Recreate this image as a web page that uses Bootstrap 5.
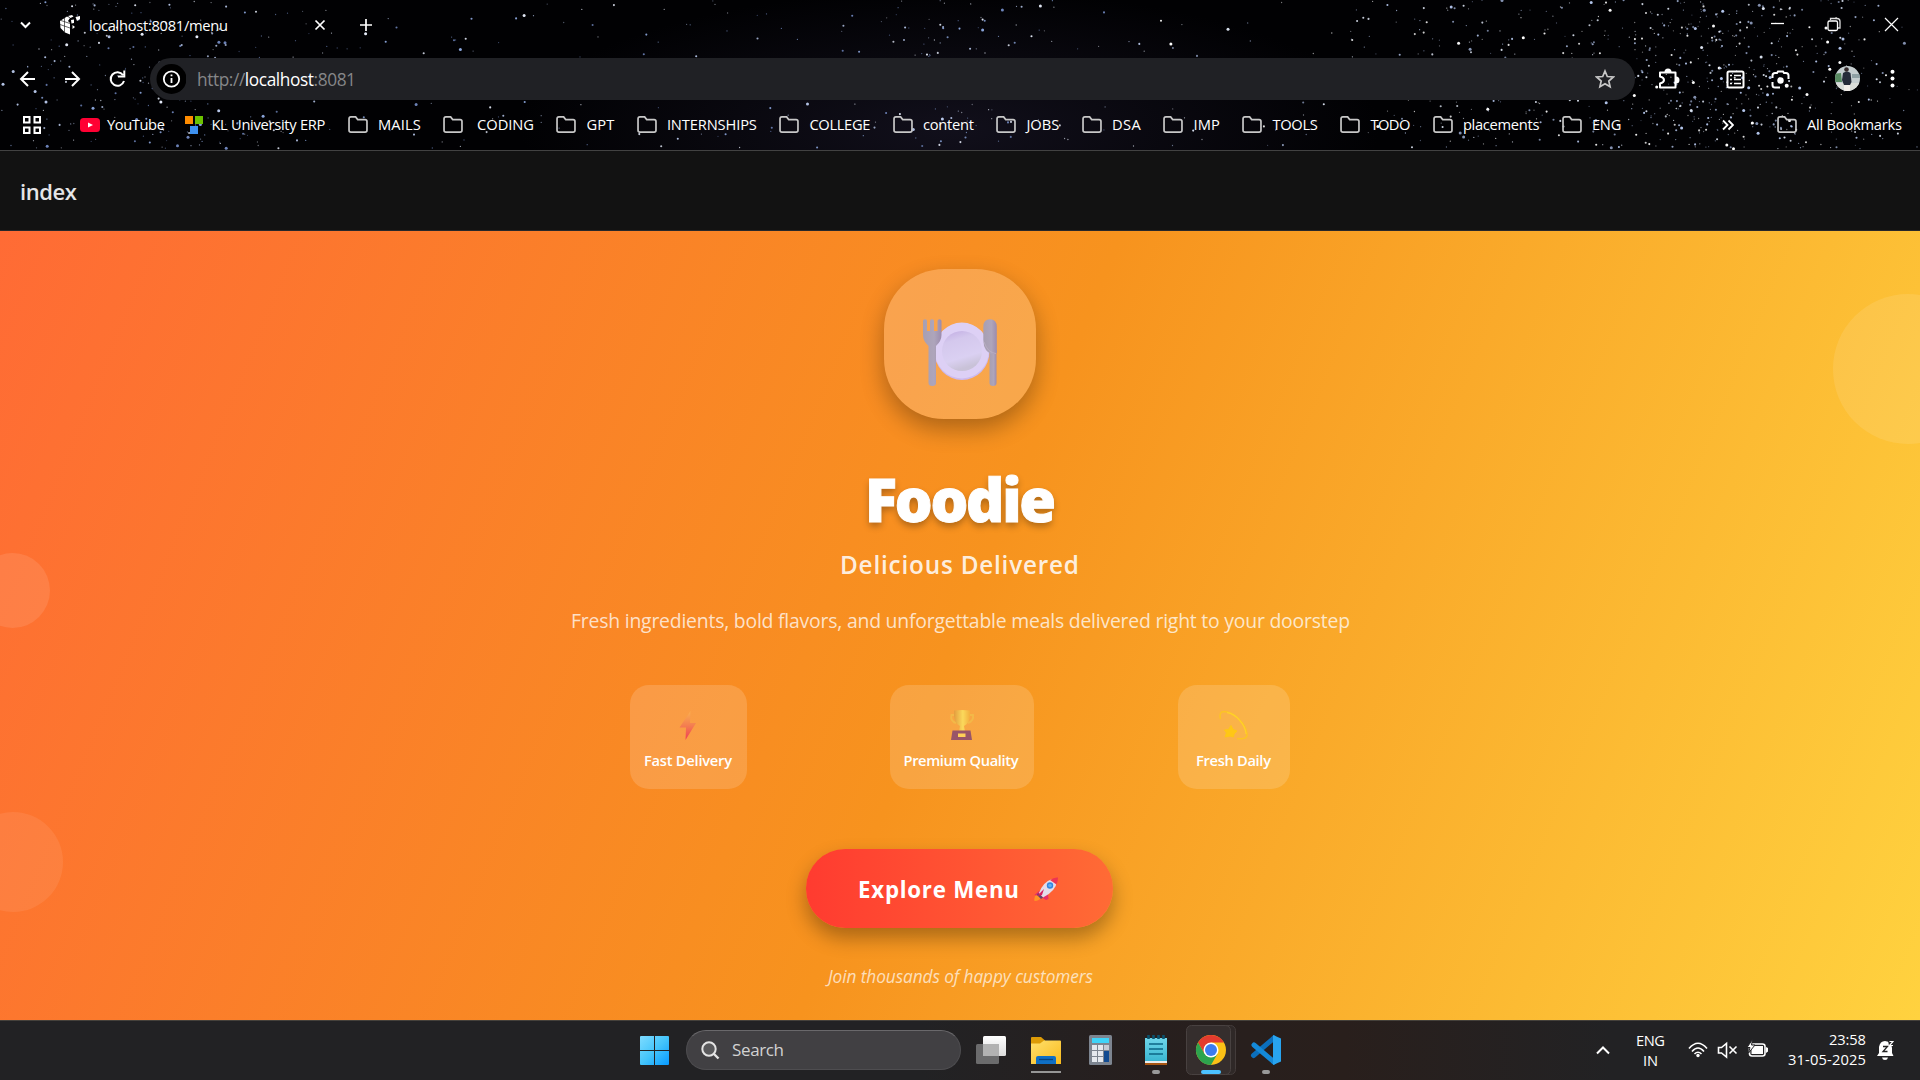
<!DOCTYPE html>
<html lang="en">
<head>
<meta charset="utf-8">
<title>localhost:8081/menu</title>
<link href="https://cdn.jsdelivr.net/npm/bootstrap@5.3.0/dist/css/bootstrap.min.css" rel="stylesheet">
<style>
body{width:1920px;height:1080px;overflow:hidden;background:#000;font-family:"Open Sans","Noto Sans",sans-serif;font-size:14.7px;line-height:20px;color:#fff}
svg{display:block;flex:none}
[data-w]{display:inline-block;white-space:pre;flex:none}
span[data-w]{margin-left:-1px;margin-right:1px}
.chrome{height:151px;border-bottom:1px solid #424242;background:#010103}
.sky{left:0;top:0;z-index:0}
.bar{position:relative;z-index:1}
.tabs{height:50px}.tools{height:58px}.marks{height:33px;gap:22.5px;padding-left:23px;padding-right:18px}
.marks .bm{gap:11px}
.marks span{margin-top:-2px}
.ln{fill:none;stroke:#fff;stroke-width:2}
.omni{width:1485px;height:42px;margin-top:0;border-radius:21px;background:#202125;padding-left:6px;padding-right:20px}
.url{font-size:17.3px;line-height:24px;color:#868789;padding-left:0;margin-top:1px}
.omni .url{margin-left:11px}
.url b{font-weight:400;color:#fff}
.apphead{height:80px;background:#121212;border-bottom:1px solid #27272a;padding-left:21px;font-size:22px;font-weight:600;line-height:30px;color:#e5e5e7;padding-top:25px}
.hero{height:789px;background:linear-gradient(112.4deg,#ff6b35 0%,#f7931e 50%,#ffd23f 100%);padding-top:38px}
.orb{border-radius:50%;background:#fff}
.orb1{width:150px;height:150px;left:1833px;top:63px;opacity:.1}
.orb2{width:75px;height:75px;left:-25px;top:321.5px;opacity:.1}
.orb3{width:100px;height:100px;left:-37px;top:581px;opacity:.08}
.tile{width:152px;height:150px}
.tile:before{content:"";position:absolute;inset:0;border-radius:60px;background:rgba(255,255,255,.2)}
.tileshadow{left:-60px;top:-60px}
.brand{font-size:59.5px;font-weight:800;line-height:80px;margin-top:40px;-webkit-text-stroke:1px #fff;text-shadow:0 4px 7px rgba(0,0,0,.3)}
.tag{font-size:24.3px;font-weight:600;line-height:35px;margin-top:8px;margin-left:-2px;color:rgba(255,255,255,.87)}
.desc{font-size:19.4px;line-height:30px;margin-top:24px;color:rgba(255,255,255,.76)}
.feats{margin-top:49px;gap:143.5px}
.feat{height:104px;padding-top:20px;border-radius:19px;background:rgba(255,255,255,.155);font-weight:600}
.feat svg{margin-bottom:5px}
.f1{width:117px}.f2{width:144px;margin-left:-1px;margin-right:1px}.f3{width:112px}
.cta{margin-top:60px;margin-left:-1px;width:307px;height:79px;border:0;border-radius:39px;background:linear-gradient(90deg,#ff3b30,#ff6b35);box-shadow:0 10px 20px rgba(0,0,0,.31);font-size:22.3px;font-weight:700;line-height:30px;padding-top:8px;padding-left:53px}
.cta svg{margin-left:14px;margin-top:-1px}
.join{font-size:17.3px;font-style:italic;line-height:30px;margin-top:34px;color:rgba(255,255,255,.7)}
.taskbar{height:60px;background:linear-gradient(90deg,#222224 0,#222224 48%,#271f1e 60%,#291f1c 70%,#222224 84%,#222224 100%);border-top:1px solid #45413b;padding-left:640px;padding-right:26px}
.taskbar>svg{margin-top:-1px}
.find{width:275px;height:40px;border-radius:20px;background:#414043;border:1px solid #4e4d50;border-top-color:#69686b;margin:-1px 15px 0 17px;padding-left:14px;font-size:17px;color:#d2d2d2}
.find svg{margin-right:13px}
.lang{margin-left:27px;margin-right:23px;margin-top:-2px;width:28px}
.clock{margin-left:21px;margin-right:11px;margin-top:-3px}
</style>
<script src="https://cdn.jsdelivr.net/npm/bootstrap@5.3.0/dist/js/bootstrap.bundle.min.js"></script>
</head>
<body>
<svg width="0" height="0" class="position-absolute"><defs>
<symbol id="folder" viewBox="0 0 21 18"><path d="M1 3.2Q1 1 3 1H8L10.2 3.8H18Q20 3.8 20 5.8V15Q20 17 18 17H3Q1 17 1 15Z" fill="none" stroke="#c8c8c8" stroke-width="1.8"/></symbol>
</defs></svg>

<header class="chrome position-relative">
  <svg id="sky" class="sky position-absolute" width="1920" height="150"></svg>
  <div class="bar tabs d-flex align-items-center">
    <svg width="90" height="50" viewBox="0 0 90 50"><path class="ln" d="M21 22.5L25.5 27L30 22.5"/>
      <g fill="#fff"><path d="M60 21L67 16.500L70 18L68 21L70 23V34.500L65 32.500L60.500 28Z"/><path d="M68 16L72 15L73.500 16.500L70.500 18ZM71 20L74 19.500V23L71.500 23.500ZM72.500 25L75 27L72.500 29ZM75.500 17L80 16V19L77 21Z"/></g><path d="M60 24.500L70 28M64.500 18V32M61 20.500L70 23.500" stroke="#222" stroke-width=".7"/></svg>
    <span data-w="138">localhost:8081/menu</span>
    <svg width="160" height="50" viewBox="228 0 160 50"><path class="ln" style="stroke-width:1.700" d="M315.500 20.500L324.500 29.500M324.500 20.500L315.500 29.500M360 25H372M366 19V31"/></svg>
    <svg class="ms-auto" width="160" height="50" viewBox="1760 0 160 50"><path d="M1771 23.500H1784" stroke="#fff" stroke-width="1.3"/><path d="M1830.500 20V18.500H1837Q1840 18.500 1840 21.500V28H1838" fill="none" stroke="#ddd" stroke-width="1.3"/><rect x="1828" y="21" width="9.500" height="9.500" rx="1.500" fill="#000" stroke="#fff" stroke-width="1.3"/><path d="M1885 18L1898 31M1898 18L1885 31" stroke="#fff" stroke-width="1.2"/></svg>
  </div>
  <div class="bar tools d-flex align-items-center">
    <svg width="150" height="58" viewBox="0 50 150 58"><path class="ln" d="M35 79H21M28 72L21 79L28 86M65 79H79M72 72L79 79L72 86"/><path class="ln" d="M123 75A6.800 6.800 0 1 0 124 81M124.300 70.500V76.500H118"/></svg>
    <div class="omni d-flex align-items-center">
      <svg width="30" height="30" viewBox="0 0 30 30"><circle cx="15.500" cy="15" r="15" fill="#000"/><circle cx="15.500" cy="15" r="7.700" fill="none" stroke="#fff" stroke-width="1.800"/><path d="M15.500 14V19M15.500 10.500V12.300" stroke="#fff" stroke-width="1.800"/></svg>
      <span class="url" data-w="158">http://<b>localhost</b>:8081</span>
      <svg class="ms-auto" width="20" height="20" viewBox="0 0 20 20"><path d="M10 2L12.300 7.500L18.300 8L13.800 12L15.100 17.800L10 14.700L4.900 17.800L6.200 12L1.700 8L7.700 7.500Z" fill="none" stroke="#c7c7c7" stroke-width="1.700"/></svg>
    </div>
    <svg width="285" height="58" viewBox="1635 50 285 58">
      <path class="ln" stroke-linejoin="round" d="M1660 72.500H1675.500V87.500H1660V83.500Q1664 82.500 1664 80Q1664 77.500 1660 76.500Z"/><path fill="#fff" d="M1664.500 72A3.500 3.500 0 0 1 1671.500 72ZM1676 76.500A3.500 3.500 0 0 1 1676 83.500Z"/>
      <rect class="ln" x="1727.500" y="71.500" width="16" height="16" rx="1.500"/><path class="ln" style="stroke-width:1.600" d="M1734 75.500H1741M1734 79.500H1741M1734 83.500H1741M1730 75.500H1732M1730 79.500H1732M1730 83.500H1732"/>
      <path class="ln" d="M1772.500 78V75.500Q1772.500 73 1775 73H1777L1778 71.500H1783L1784 73H1786Q1788.500 73 1788.500 75.500V79M1772.500 82V85Q1772.500 87.500 1775 87.500H1780"/><circle cx="1780.500" cy="80.500" r="3.200" fill="#fff"/><circle cx="1786.700" cy="85.700" r="2" fill="#fff"/><circle cx="1791.300" cy="86.500" r="1" fill="#aaa"/>
      <clipPath id="av"><circle cx="1847.500" cy="78.500" r="12.500"/></clipPath>
      <g clip-path="url(#av)"><path fill="#c5ced0" d="M1834 65H1861V92H1834Z"/><path fill="#588a61" d="M1834 74L1841 73L1842 82H1834Z"/><path fill="#8fa1a5" d="M1852 74H1861V78H1852Z"/><path fill="#d9dcd8" d="M1835 83H1861V92H1835Z"/><path fill="#252b39" d="M1843 73Q1847 70 1850.500 73L1851.500 82L1850 85H1844L1842 80Z"/><circle cx="1846.500" cy="69.500" r="2.300" fill="#352a2b"/><path fill="#f3eee9" d="M1844 85H1850V92H1844Z"/></g>
      <g fill="#fff"><circle cx="1892.500" cy="71.700" r="2"/><circle cx="1892.500" cy="78.500" r="2"/><circle cx="1892.500" cy="85.400" r="2"/></g>
    </svg>
  </div>
  <nav class="bar marks d-flex align-items-center">
    <svg width="18" height="18" viewBox="0 0 18 18" style="margin-right:16.400px"><path class="ln" d="M1 1H6.500V6.500H1ZM11.500 1H17V6.500H11.500ZM1 11.500H6.500V17H1ZM11.500 11.500H17V17H11.500Z"/></svg>
    <div class="bm d-flex align-items-center" style="gap:8px;margin-right:-2px"><svg width="20" height="14"><rect width="20" height="14" rx="3.500" fill="#ff0033"/><path d="M8 4.500V9.500L13 7Z" fill="#fff"/></svg><span data-w="57">YouTube</span></div>
    <div class="bm d-flex align-items-center" style="gap:9px"><svg width="18" height="18"><rect width="8" height="8" fill="#ff8c00"/><rect x="10" width="8" height="8" fill="#6bc200"/><rect x="5" y="10" width="8" height="8" fill="#3e91f0"/></svg><span data-w="113">KL University ERP</span></div>
    <div class="bm d-flex align-items-center"><svg width="20" height="17"><use href="#folder"/></svg><span data-w="42">MAILS</span></div>
    <div class="bm d-flex align-items-center"><svg width="20" height="17"><use href="#folder"/></svg><span data-w="59.500"> CODING</span></div>
    <div class="bm d-flex align-items-center"><svg width="20" height="17"><use href="#folder"/></svg><span data-w="27">GPT</span></div>
    <div class="bm d-flex align-items-center"><svg width="20" height="17"><use href="#folder"/></svg><span data-w="89">INTERNSHIPS</span></div>
    <div class="bm d-flex align-items-center"><svg width="20" height="17"><use href="#folder"/></svg><span data-w="60">COLLEGE</span></div>
    <div class="bm d-flex align-items-center"><svg width="20" height="17"><use href="#folder"/></svg><span data-w="50">content</span></div>
    <div class="bm d-flex align-items-center"><svg width="20" height="17"><use href="#folder"/></svg><span data-w="32">JOBS</span></div>
    <div class="bm d-flex align-items-center"><svg width="20" height="17"><use href="#folder"/></svg><span data-w="28">DSA</span></div>
    <div class="bm d-flex align-items-center"><svg width="20" height="17"><use href="#folder"/></svg><span data-w="25.500">IMP</span></div>
    <div class="bm d-flex align-items-center"><svg width="20" height="17"><use href="#folder"/></svg><span data-w="44.500">TOOLS</span></div>
    <div class="bm d-flex align-items-center"><svg width="20" height="17"><use href="#folder"/></svg><span data-w="39">TODO</span></div>
    <div class="bm d-flex align-items-center"><svg width="20" height="17"><use href="#folder"/></svg><span data-w="75.500">placements</span></div>
    <div class="bm d-flex align-items-center"><svg width="20" height="17"><use href="#folder"/></svg><span data-w="28.500">ENG</span></div>
    <svg class="ms-auto" width="12" height="12" style="margin-right:21px"><path class="ln" style="stroke-width:1.800" d="M1 1.500L5.500 6L1 10.500M6.500 1.500L11 6L6.500 10.500"/></svg>
    <div class="bm d-flex align-items-center"><svg width="20" height="17"><use href="#folder"/></svg><span data-w="94">All Bookmarks</span></div>
  </nav>
</header>

<div class="apphead"><span data-w="56">index</span></div>

<main class="hero position-relative overflow-hidden d-flex flex-column align-items-center">
  <div class="orb orb1 position-absolute"></div><div class="orb orb2 position-absolute"></div><div class="orb orb3 position-absolute"></div>
  <div class="tile position-relative">
    <svg class="tileshadow position-absolute" width="272" height="290" viewBox="824 209 272 290">
      <defs><filter id="bl" x="-60%" y="-60%" width="220%" height="220%"><feGaussianBlur stdDeviation="12"/></filter>
      <mask id="out" maskUnits="userSpaceOnUse" x="824" y="209" width="272" height="290"><rect x="824" y="209" width="272" height="290" fill="#fff"/><rect x="884" y="269" width="152" height="150" rx="60"/></mask></defs>
      <g mask="url(#out)"><rect x="884" y="279" width="152" height="150" rx="60" fill="#000" opacity=".3" filter="url(#bl)"/></g>
    </svg>
    <svg class="position-absolute start-0 top-0" style="z-index:1" width="152" height="150" viewBox="884 269 152 150">
      <defs><linearGradient id="pl" x1="0" y1="0" x2="0.300" y2="1"><stop offset="0" stop-color="#c0abe2"/><stop offset=".3" stop-color="#d4c8ed"/><stop offset=".75" stop-color="#dad0f2"/><stop offset="1" stop-color="#c9c2d8"/></linearGradient>
      <linearGradient id="mt"><stop offset="0" stop-color="#a79fb2"/><stop offset=".6" stop-color="#aea5bb"/><stop offset="1" stop-color="#9c8cad"/></linearGradient></defs>
      <ellipse cx="962" cy="351.500" rx="27.500" ry="28.500" fill="#cdbaf0"/><ellipse cx="961.800" cy="350.500" rx="27.200" ry="28" fill="#ddd0f5"/><circle cx="962" cy="351" r="20" fill="url(#pl)"/>
      <path fill="url(#mt)" d="M923 321Q923 319.300 925 319.300T927 321V331H930V321Q930 319.300 932 319.300T934 321V331H937.500V321Q937.500 319.300 939.500 319.300T941.500 321V335Q941.500 341 936 346V383Q936 386 932.300 386T928.500 383V346Q923 341 923 335Z"/>
      <path fill="url(#mt)" d="M989.500 350H996.500V383Q996.500 386 993 386T989.500 383Z"/><path fill="url(#mt)" d="M983.300 327Q983.300 319.300 990 319.300T996.800 327V353Q991 356 986 350Q983.300 346 983.300 340Z"/><path d="M984 342Q988 353 996 353.500" fill="none" stroke="#bdb1c5" stroke-width=".8"/>
    </svg>
  </div>
  <div class="brand" data-w="190">Foodie</div>
  <div class="tag" data-w="238">Delicious Delivered</div>
  <div class="desc" data-w="778">Fresh ingredients, bold flavors, and unforgettable meals delivered right to your doorstep</div>
  <div class="feats d-flex">
    <div class="feat f1 d-flex flex-column align-items-center">
      <svg width="40" height="40" viewBox="0 0 40 40"><defs><linearGradient id="bt" x1="0" y1="0" x2="0" y2="1"><stop offset="0" stop-color="#fbb050"/><stop offset=".5" stop-color="#f47e50"/><stop offset="1" stop-color="#f03d55"/></linearGradient></defs><path d="M21.500 6L10.500 22.500H17L16.500 35L27 18H21Z" fill="url(#bt)"/></svg>
      <span data-w="87">Fast Delivery</span></div>
    <div class="feat f2 d-flex flex-column align-items-center">
      <svg width="40" height="40" viewBox="0 0 40 40"><defs><linearGradient id="tr"><stop offset="0" stop-color="#e39c3e"/><stop offset=".55" stop-color="#fbd95b"/><stop offset="1" stop-color="#f3ae3d"/></linearGradient></defs><path d="M12 10H9.500Q8 16 14 18M28 10H31Q32 16 26 18" fill="none" stroke="#f3b848" stroke-width="2"/><path d="M12 5.500Q20 4.500 28 5.500Q29 18 22 21L23 26H17L18 21Q11 18 12 5.500Z" fill="url(#tr)"/><path d="M10.500 25.500H28.500L30 35H9Z" fill="#995568"/><path d="M16 28.500H23.500V32H16Z" fill="#ffd058"/></svg>
      <span data-w="114">Premium Quality</span></div>
    <div class="feat f3 d-flex flex-column align-items-center">
      <svg width="40" height="40" viewBox="0 0 40 40"><path d="M6.500 14Q4.500 6.500 10.500 6.500C20 7 32 19 33 29Q33.500 35 23 33.500" fill="none" stroke="#fcc424" stroke-width="1.500"/><path d="M13 7.500C22 9 31 19 32 29" fill="none" stroke="#ffd02a" stroke-width="1.300"/><path d="M17 20.500L19 24.500L23 26L20 29L19.500 32L16 31L11 32L12.500 28L10.500 25L14.500 24.500Z" fill="#ffc715" stroke="#ffc715" stroke-linejoin="round"/></svg>
      <span data-w="74">Fresh Daily</span></div>
  </div>
  <button class="cta btn text-white d-flex align-items-center"><span data-w="160">Explore Menu</span>
    <svg width="26" height="26" viewBox="0 0 26 26"><path d="M6 15L1.500 19L6 20L13 24L15.500 23L15 18Z" fill="#e52e66"/><path d="M2 20Q1 23 1.500 25Q6 25 7.500 22L5 19Z" fill="#ff9425"/><path d="M6 17Q10 6 19 3L24 5Q23 15 10 21.500Z" fill="#e4dcea"/><path d="M17 4Q21 1 25 1.500Q25 5 23.500 8.500Z" fill="#ee3552"/><path d="M5 17L10 21.500L8 23L4 19Z" fill="#5f456e"/><circle cx="17" cy="9.500" r="3.200" fill="#3186df"/><circle cx="17" cy="9.500" r="1.800" fill="#62aef2"/><path d="M4 20L11 13L9 19Z" fill="#d61d60"/></svg>
  </button>
  <div class="join" data-w="264">Join thousands of happy customers</div>
</main>

<footer class="taskbar d-flex align-items-center">
  <svg width="29" height="60" viewBox="640 1020 29 60"><defs><linearGradient id="wn" gradientUnits="userSpaceOnUse" x1="640" y1="1036" x2="669" y2="1065"><stop offset="0" stop-color="#7edcff"/><stop offset=".5" stop-color="#45c5fb"/><stop offset="1" stop-color="#079aff"/></linearGradient></defs><path fill="url(#wn)" d="M640 1037Q640 1036 641 1036H654V1050H640ZM655 1036H668Q669 1036 669 1037V1050H655ZM640 1051H654V1065H641Q640 1065 640 1064ZM655 1051H669V1064Q669 1065 668 1065H655Z"/></svg>
  <div class="find d-flex align-items-center"><svg width="19" height="19" viewBox="0 0 19 19"><circle cx="8" cy="8" r="6.700" fill="#59595b" stroke="#e4e4e4" stroke-width="2"/><path d="M12.500 12.500L17.500 17.500" stroke="#e4e4e4" stroke-width="2.400"/></svg><span data-w="51">Search</span></div>
  <svg width="30" height="60" viewBox="976 1020 30 60"><defs><linearGradient id="tv" x1="0" y1="0" x2="0" y2="1"><stop offset="0" stop-color="#fff"/><stop offset="1" stop-color="#dcdcdc"/></linearGradient></defs><rect x="983" y="1036" width="23" height="20" rx="1.500" fill="url(#tv)"/><rect x="976" y="1044" width="23" height="20" rx="1.500" fill="#6b6b6c"/><path d="M983 1044H999V1056H983Z" fill="#b2b2b2"/></svg>
  <svg width="250" height="60" viewBox="1031 1020 250 60" style="margin-left:25px">
    <defs><linearGradient id="fo" x1="0" y1="0" x2="1" y2="1"><stop offset="0" stop-color="#ffe06d"/><stop offset="1" stop-color="#f9bb1d"/></linearGradient>
    <linearGradient id="np" x1="0" y1="0" x2="0" y2="1"><stop offset="0" stop-color="#6fd6ea"/><stop offset="1" stop-color="#38b5d0"/></linearGradient></defs>
    <path fill="#dc9b07" d="M1031 1038Q1031 1037 1032 1037H1041L1045 1040.500V1045H1031Z"/><path fill="url(#fo)" d="M1031 1043.500H1040L1044 1040.500H1060Q1061 1040.500 1061 1041.500V1064H1031Z"/><path fill="#0f6fc5" d="M1036 1064V1058Q1036 1056 1038 1056H1054Q1056 1056 1056 1058V1064Z"/><path d="M1039 1059.500H1053" stroke="#09447e" stroke-width="1.300"/><path d="M1031 1072H1061" stroke="#969696" stroke-width="2"/>
    <rect x="1089" y="1035" width="23" height="30" rx="1.500" fill="#7d8590"/><rect x="1092" y="1038" width="17" height="5" fill="#3fd4f8"/><path fill="#e5e9ee" d="M1092 1045h5v5h-5zM1098 1045h5v5h-5zM1092 1051h5v5h-5zM1098 1051h5v5h-5zM1092 1057h5v5h-5zM1098 1057h5v5h-5z"/><path fill="#c5cbd4" d="M1104 1045h5v5h-5z"/><path fill="#124b91" d="M1104 1051h5v11h-5z"/>
    <path fill="url(#np)" d="M1145 1038H1167V1062H1145Z"/><path fill="#e8edee" d="M1145 1061H1167V1063H1145Z"/><path fill="#a85613" d="M1145 1063H1167V1065H1145Z"/><path d="M1149 1044H1163M1149 1049H1163M1149 1054H1163" stroke="#0d6685" stroke-width="1.600"/><path d="M1148.500 1035V1039M1153.500 1035V1039M1158.500 1035V1039M1163.500 1035V1039" stroke="#0b526d" stroke-width="2.600"/>
    <rect x="1152" y="1070" width="8" height="4" rx="2" fill="#999"/>
    <rect x="1190.500" y="1025.500" width="45" height="49" rx="5" fill="#2f2827" stroke="#433b3a"/><rect x="1186.500" y="1025.500" width="44" height="49" rx="5" fill="#352e2d" stroke="#484140"/>
    <circle cx="1211" cy="1050" r="15" fill="#fbc116"/><path fill="#e33b2e" d="M1198 1042.500A15 15 0 0 1 1224 1042.500H1211L1204.500 1053.700Z"/><path fill="#2da44e" d="M1198 1042.500A15 15 0 0 0 1211 1065L1217.500 1053.700H1204.500Z"/><circle cx="1211" cy="1050" r="7.500" fill="#fff"/><circle cx="1211" cy="1050" r="6" fill="#3c7cf0"/>
    <rect x="1201" y="1070" width="20" height="4" rx="2" fill="#4cc2ff"/>
    <path d="M1274 1038L1253.500 1055.500" stroke="#0b6fbd" stroke-width="5" stroke-linecap="round"/><path d="M1254 1045L1274 1062" stroke="#1489d8" stroke-width="5" stroke-linecap="round"/><path fill="#28a4f0" d="M1273 1035L1281 1038.500V1061.500L1273 1065Z"/>
    <rect x="1262" y="1070" width="8" height="4" rx="2" fill="#999"/>
  </svg>
  <svg class="ms-auto" width="14" height="60" viewBox="1596 1020 14 60"><path class="ln" d="M1597 1053.500L1603 1047.500L1609 1053.500"/></svg>
  <div class="lang text-center"><span data-w="28">ENG</span><br><span data-w="14">IN</span></div>
  <svg width="80" height="60" viewBox="1688 1020 80 60">
    <g class="ln" style="stroke-width:1.600"><path d="M1689 1048.500Q1698 1038 1707 1048.500M1692 1051.500Q1698 1044.500 1704 1051.500M1694.500 1054Q1698 1050.500 1701.500 1054"/>
    <path d="M1718.500 1047.500V1053H1721.500L1726.500 1057V1043.500L1721.500 1047.500ZM1729.500 1046.500L1736.500 1053.500M1736.500 1046.500L1729.500 1053.500"/>
    <rect x="1749.500" y="1044" width="15.500" height="12" rx="2.500"/></g><circle cx="1698" cy="1055.500" r="1.700" fill="#fff"/><rect x="1751.500" y="1046" width="11.500" height="8" fill="#fff"/><path fill="#fff" d="M1766 1047L1768 1048V1051.500L1766 1053Z"/><path d="M1752.500 1039.500L1747 1047.500H1750L1748.500 1053L1755 1045H1751.500Z" fill="#fff" stroke="#222224"/>
  </svg>
  <div class="clock text-end"><span data-w="36">23:58</span><br><span data-w="77">31-05-2025</span></div>
  <svg width="17" height="60" viewBox="1877 1020 17 60"><path fill="#fff" d="M1877 1056L1879 1053V1047Q1880 1041 1885 1041Q1892 1042 1892 1048V1053L1893.500 1056ZM1882 1057.500H1888Q1887.500 1060 1885 1060T1882 1057.500Z"/><path d="M1883 1046.500H1887.500L1883 1051.500H1887.500" fill="none" stroke="#222" stroke-width="1.300"/><path d="M1888 1040H1894V1046H1889Z" fill="#222224"/><path d="M1889.500 1041.500H1893L1889.500 1045.500H1893" fill="none" stroke="#fff" stroke-width="1.200"/></svg>
</footer>

<script>
// Set each label to its column width by tracking.
document.querySelectorAll('[data-w]').forEach(function (el) {
  el.style.width = 'max-content';
  var want = +el.dataset.w + 1, n = el.textContent.length;
  el.style.letterSpacing = ((want - el.getBoundingClientRect().width) / (n - 1)) + 'px';
  el.style.width = want - 1 + 'px';
});
// Star field of the browser theme: repeatable random points, denser around clusters.
(function () {
  var s = 77, rnd = function () { s = (s * 16807) % 2147483647; return s / 2147483647; };
  var g = function () { return rnd() + rnd() + rnd() - 1.5; };
  var groups = [[0,1920,420,0],[170,150,200,1],[970,110,75,1],[1690,130,360,1],[1480,140,130,1],[1800,120,110,1]];
  var out = '<defs><radialGradient id="neb"><stop offset="0" stop-color="#1a1728" stop-opacity=".65"/><stop offset="1" stop-color="#1a1728" stop-opacity="0"/></radialGradient></defs><ellipse cx="950" cy="130" rx="430" ry="140" fill="url(#neb)"/>';
  groups.forEach(function (q) {
    for (var i = 0; i < q[2]; i++) {
      var x = q[3] ? q[0] + g() * q[1] : rnd() * 1920, y = rnd() * 149, b = rnd(), r = b > .92 ? 1.5 : b > .6 ? 1.05 : .65;
      var c = (x > 1150 ? ['#b4c6ec', '#dfe7f5', '#ffffff', '#8795b5'] : ['#8ea9e0', '#b9c9ec', '#e8eefc', '#6f86bd'])[Math.floor(rnd() * 4)];
      out += '<circle cx="' + x.toFixed(1) + '" cy="' + y.toFixed(1) + '" r="' + r + '" fill="' + c + '" opacity="' + (.4 + b * .6).toFixed(2) + '"/>';
    }
  });
  document.getElementById('sky').innerHTML = out;
})();
</script>
</body>
</html>
